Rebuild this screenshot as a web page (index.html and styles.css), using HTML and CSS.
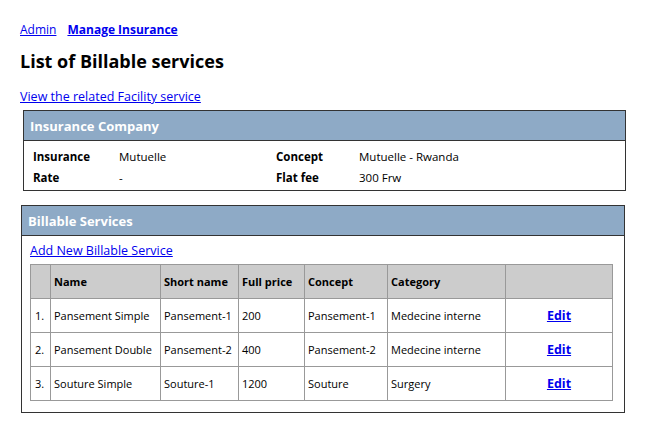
FILE: index.html
```html
<!DOCTYPE html>
<html>
<head>
<meta charset="utf-8">
<link rel="stylesheet" href="styles.css">
</head>
<body>
<div class="page">
  <nav class="crumbs">
    <a href="#" class="crumb">Admin</a>
    <a href="#" class="crumb current">Manage Insurance</a>
  </nav>
  <h1 class="title">List of Billable services</h1>
  <a href="#" class="link related">View the related Facility service</a>

  <section class="panel panel-ins">
    <div class="panel-head">Insurance Company</div>
    <div class="info">
      <span class="lbl">Insurance</span><span class="val">Mutuelle</span>
      <span class="lbl">Concept</span><span class="val">Mutuelle - Rwanda</span>
      <span class="lbl">Rate</span><span class="val">-</span>
      <span class="lbl">Flat fee</span><span class="val">300 Frw</span>
    </div>
  </section>

  <section class="panel panel-bill">
    <div class="panel-head">Billable Services</div>
    <div class="panel-body">
      <a href="#" class="link add">Add New Billable Service</a>
      <table class="grid">
        <colgroup>
          <col class="c-num"><col class="c-name"><col class="c-short"><col class="c-price"><col class="c-concept"><col class="c-cat"><col class="c-act">
        </colgroup>
        <thead>
          <tr><th></th><th>Name</th><th>Short name</th><th>Full price</th><th>Concept</th><th>Category</th><th></th></tr>
        </thead>
        <tbody>
          <tr><td class="num">1.</td><td>Pansement Simple</td><td>Pansement-1</td><td>200</td><td>Pansement-1</td><td>Medecine interne</td><td class="act"><a href="#">Edit</a></td></tr>
          <tr><td class="num">2.</td><td>Pansement Double</td><td>Pansement-2</td><td>400</td><td>Pansement-2</td><td>Medecine interne</td><td class="act"><a href="#">Edit</a></td></tr>
          <tr><td class="num">3.</td><td>Souture Simple</td><td>Souture-1</td><td>1200</td><td>Souture</td><td>Surgery</td><td class="act"><a href="#">Edit</a></td></tr>
        </tbody>
      </table>
    </div>
  </section>
</div>
</body>
</html>
```

FILE: styles.css
```css
html, body {
  margin: 0;
  padding: 0;
  background: #fff;
}
body {
  font-family: "Comic Sans MS", "Open Sans", "DejaVu Sans", sans-serif;
  font-size: 12px;
  color: #000;
}
.page {
  padding: 22px 0 0 20px;
  width: 607px;
}
a { color: #0000ee; }
.crumbs {
  display: flex;
  gap: 11px;
  height: 16px;
  line-height: 16px;
}
.crumb { font-size: 12px; }
.crumb.current { font-weight: bold; }
.title {
  margin: 11px 0 0 0;
  font-size: 18px;
  line-height: 24px;
  font-weight: bold;
}
.link {
  display: inline-block;
  font-size: 12.5px;
  line-height: 16px;
}
.related { margin-top: 16px; }
.panel {
  border: 1.5px solid #333;
  background: #fff;
  box-sizing: border-box;
}
.panel-head {
  background: #8eaac6;
  color: #fff;
  font-weight: bold;
  font-size: 13px;
  height: 29px;
  line-height: 30px;
  padding-left: 6px;
  border-bottom: 1.5px solid #333;
}
.panel-ins {
  margin: 5px 0 0 3px;
  width: 603px;
}
.info {
  display: grid;
  grid-template-columns: 86px 157px 83px 1fr;
  grid-auto-rows: 21px;
  padding: 5px 0 2px 9px;
  line-height: 21px;
  font-size: 11.5px;
}
.lbl { font-weight: bold; }
.panel-bill {
  margin: 14px 0 0 1px;
  width: 604px;
  height: 208px;
}
.panel-body {
  padding: 6px 0 0 8px;
}
.grid {
  margin-top: 5px;
  border-collapse: collapse;
  width: 582px;
  table-layout: fixed;
  border: 1px solid #888;
}
.c-num { width: 20px; }
.c-name { width: 110px; }
.c-short { width: 78px; }
.c-price { width: 66px; }
.c-concept { width: 83px; }
.c-cat { width: 118px; }
.c-act { width: 107px; }
.grid th, .grid td {
  border: 1px solid #999;
  height: 33px;
  padding: 0 0 0 3px;
  text-align: left;
  white-space: nowrap;
  overflow: hidden;
  font-size: 11px;
}
.grid th {
  background: #cccccc;
  font-weight: bold;
}
.grid td.num { padding-left: 4px; }
.grid td.act {
  text-align: center;
  font-weight: bold;
  font-size: 12.5px;
  padding: 0;
}
```
